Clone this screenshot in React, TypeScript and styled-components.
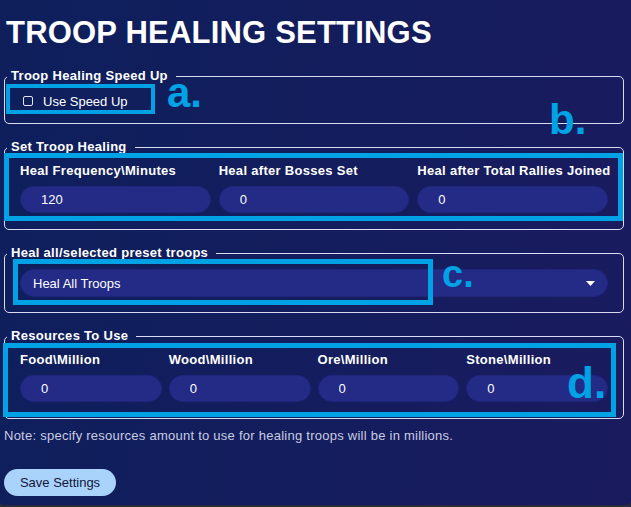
import React, { useState } from "react";
import styled, { createGlobalStyle } from "styled-components";

const GlobalStyle = createGlobalStyle`
  html, body {
    margin: 0;
    padding: 0;
    background: #2a2b3b;
  }
  body {
    font-family: "Liberation Sans", Arial, sans-serif;
  }
`;

const Page = styled.div`
  position: relative;
  width: 631px;
  height: 505px;
  box-sizing: border-box;
  padding: 15px 7px 0 4px;
  background: linear-gradient(100deg, #0e1f5c 0%, #141d5d 55%, #1a1b5f 100%);
  border-radius: 0 0 4px 4px;
  overflow: hidden;
  color: #ffffff;
`;

const Title = styled.h1`
  margin: 0 0 17px 2px;
  font-size: 31px;
  line-height: 36px;
  font-weight: 700;
  letter-spacing: 0.2px;
  color: #ffffff;
`;

const Group = styled.fieldset<{ $pt?: number; $pb?: number; $last?: boolean }>`
  margin: 0 0 ${(p) => (p.$last ? 0 : 15)}px 0;
  padding: ${(p) => p.$pt ?? 8}px 15px ${(p) => p.$pb ?? 16}px 15px;
  border: 1px solid #d9dcf0;
  border-radius: 5px;
  min-width: 0;
`;

const Legend = styled.legend`
  margin-left: -13px;
  padding: 0 8px 0 4px;
  font-size: 13px;
  line-height: 16px;
  font-weight: 700;
  letter-spacing: 0.3px;
  color: #ffffff;
`;

const CheckRow = styled.label`
  display: flex;
  align-items: center;
  gap: 10px;
  height: 34px;
  padding-left: 3px;
  font-size: 13px;
  color: #ffffff;
  cursor: pointer;
`;

const Box = styled.span<{ $on: boolean }>`
  width: 8px;
  height: 8px;
  border: 1px solid #e4e6f4;
  border-radius: 2px;
  background: ${(p) => (p.$on ? "#a9d3fb" : "transparent")};
`;

const Fields = styled.div<{ $cols: number; $gap: number }>`
  display: grid;
  grid-template-columns: repeat(${(p) => p.$cols}, 1fr);
  column-gap: ${(p) => p.$gap}px;
`;

const Field = styled.div`
  display: flex;
  flex-direction: column;
  gap: 7px;
  min-width: 0;
`;

const Label = styled.span`
  font-size: 13px;
  line-height: 16px;
  font-weight: 700;
  letter-spacing: 0.3px;
  color: #ffffff;
  white-space: nowrap;
`;

const Input = styled.input`
  box-sizing: border-box;
  width: 100%;
  height: 27px;
  padding: 0 0 0 20px;
  border: 1px solid #1f267c;
  border-radius: 14px;
  background: #232b86;
  color: #ffffff;
  font-family: "Liberation Sans", Arial, sans-serif;
  font-size: 13px;
  outline: none;
`;

const Select = styled.div`
  box-sizing: border-box;
  display: flex;
  align-items: center;
  justify-content: space-between;
  height: 28px;
  padding: 0 12px 0 12px;
  border: 1px solid #1f267c;
  border-radius: 14px;
  background: #232b86;
  font-size: 13px;
  color: #ffffff;
`;

const Note = styled.p`
  margin: 9px 0 0 0;
  font-size: 13px;
  line-height: 16px;
  letter-spacing: 0.25px;
  color: #c9cce2;
`;

const SaveButton = styled.button`
  margin-top: 25px;
  width: 112px;
  height: 27px;
  border: none;
  border-radius: 14px;
  background: #a9d3fb;
  color: #14163a;
  font-family: "Liberation Sans", Arial, sans-serif;
  font-size: 13px;
  cursor: pointer;
`;

const Mark = styled.div<{ $x: number; $y: number; $w: number; $h: number; $b: number }>`
  position: absolute;
  left: ${(p) => p.$x}px;
  top: ${(p) => p.$y}px;
  width: ${(p) => p.$w}px;
  height: ${(p) => p.$h}px;
  box-sizing: border-box;
  border: ${(p) => p.$b}px solid #00a2e6;
  pointer-events: none;
`;

const Letter = styled.span<{ $x: number; $y: number; $size: number }>`
  position: absolute;
  left: ${(p) => p.$x}px;
  top: ${(p) => p.$y}px;
  font-size: ${(p) => p.$size}px;
  line-height: 1;
  font-weight: 700;
  color: #00a2e6;
  pointer-events: none;
`;

const Caret = () => (
  <svg width="9" height="5" viewBox="0 0 9 5">
    <path d="M0 0 H9 L4.5 5 Z" fill="#ffffff" />
  </svg>
);

const healFields = [
  { label: "Heal Frequency\\Minutes", value: "120" },
  { label: "Heal after Bosses Set", value: "0" },
  { label: "Heal after Total Rallies Joined", value: "0" },
];

const resourceFields = [
  { label: "Food\\Million", value: "0" },
  { label: "Wood\\Million", value: "0" },
  { label: "Ore\\Million", value: "0" },
  { label: "Stone\\Million", value: "0" },
];

const App: React.FC = () => {
  const [speedUp, setSpeedUp] = useState<boolean>(false);

  return (
    <>
      <GlobalStyle />
      <Page>
        <Title>TROOP HEALING SETTINGS</Title>

        <Group $pt={0} $pb={5}>
          <Legend>Troop Healing Speed Up</Legend>
          <CheckRow onClick={() => setSpeedUp(!speedUp)}>
            <Box $on={speedUp} />
            Use Speed Up
          </CheckRow>
        </Group>

        <Group>
          <Legend>Set Troop Healing</Legend>
          <Fields $cols={3} $gap={8}>
            {healFields.map((f) => (
              <Field key={f.label}>
                <Label>{f.label}</Label>
                <Input defaultValue={f.value} />
              </Field>
            ))}
          </Fields>
        </Group>

        <Group $pb={15}>
          <Legend>Heal all/selected preset troops</Legend>
          <Select>
            Heal All Troops
            <Caret />
          </Select>
        </Group>

        <Group $last>
          <Legend>Resources To Use</Legend>
          <Fields $cols={4} $gap={7}>
            {resourceFields.map((f) => (
              <Field key={f.label}>
                <Label>{f.label}</Label>
                <Input defaultValue={f.value} />
              </Field>
            ))}
          </Fields>
        </Group>

        <Note>
          Note: specify resources amount to use for healing troops will be in millions.
        </Note>

        <SaveButton>Save Settings</SaveButton>

        {/* annotation overlay */}
        <Mark $x={6} $y={84} $w={149} $h={30} $b={4} />
        <Letter $x={167} $y={72} $size={42}>a.</Letter>
        <Mark $x={4} $y={153} $w={619} $h={68} $b={5} />
        <Letter $x={549} $y={99} $size={42}>b.</Letter>
        <Mark $x={13} $y={259} $w={420} $h={46} $b={5} />
        <Letter $x={442} $y={255} $size={38}>c.</Letter>
        <Mark $x={3} $y={343} $w={613} $h={74} $b={5} />
        <Letter $x={567} $y={361} $size={44}>d.</Letter>
      </Page>
    </>
  );
};

export default App;
